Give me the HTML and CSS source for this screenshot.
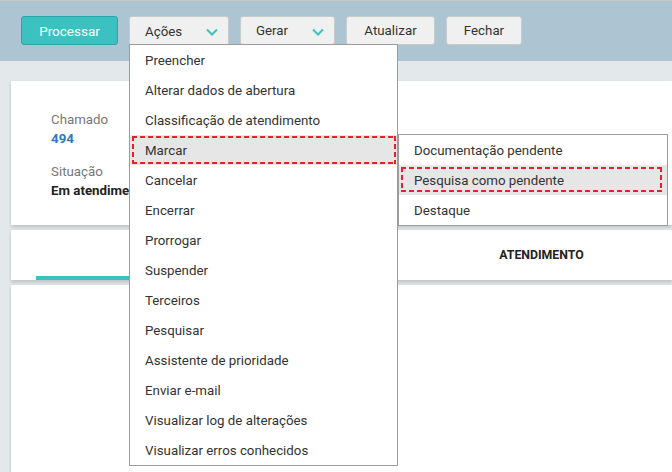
FILE: index.html
```html
<!DOCTYPE html>
<html lang="pt-BR">
<head>
<meta charset="utf-8">
<title>Chamado 494</title>
<link rel="stylesheet" href="styles.css">
</head>
<body>
<div class="page">
  <header class="toolbar">
    <button class="btn btn-primary w-processar">Processar</button>
    <button class="btn btn-drop w-acoes open">Ações
      <svg class="chev" width="12" height="8" viewBox="0 0 12 8"><path d="M1 1.5 L6 6.5 L11 1.5" fill="none" stroke="#3cc0c0" stroke-width="2"/></svg>
    </button>
    <button class="btn btn-drop w-gerar">Gerar
      <svg class="chev" width="12" height="8" viewBox="0 0 12 8"><path d="M1 1.5 L6 6.5 L11 1.5" fill="none" stroke="#3cc0c0" stroke-width="2"/></svg>
    </button>
    <button class="btn w-atualizar">Atualizar</button>
    <button class="btn w-fechar">Fechar</button>
  </header>

  <main class="content">
    <section class="card info">
      <div class="field">
        <div class="label">Chamado</div>
        <div class="value link">494</div>
      </div>
      <div class="field">
        <div class="label">Situação</div>
        <div class="value">Em atendimento</div>
      </div>
    </section>
    <section class="card tabs">
      <div class="tab active"></div>
      <div class="tab">ATENDIMENTO</div>
    </section>
    <section class="card body-card"></section>
  </main>

  <ul class="menu">
    <li>Preencher</li>
    <li>Alterar dados de abertura</li>
    <li>Classificação de atendimento</li>
    <li class="hl">Marcar</li>
    <li>Cancelar</li>
    <li>Encerrar</li>
    <li>Prorrogar</li>
    <li>Suspender</li>
    <li>Terceiros</li>
    <li>Pesquisar</li>
    <li>Assistente de prioridade</li>
    <li>Enviar e-mail</li>
    <li>Visualizar log de alterações</li>
    <li>Visualizar erros conhecidos</li>
  </ul>

  <ul class="menu submenu">
    <li>Documentação pendente</li>
    <li class="hl hl-sub">Pesquisa como pendente</li>
    <li>Destaque</li>
  </ul>
</div>
</body>
</html>
```

FILE: styles.css
```css
* { box-sizing: border-box; }
html, body {
  margin: 0;
  padding: 0;
}
body {
  width: 672px;
  height: 472px;
  overflow: hidden;
  font-family: Roboto, "Liberation Sans", Arial, sans-serif;
  font-size: 13.3px;
  color: #333;
  background: #e3e8eb;
}
.page {
  position: relative;
  height: 472px;
}

/* toolbar */
.toolbar {
  height: 61px;
  background: #adc5d2;
  border-top: 1px solid #c4c8ca;
  padding: 15px 0 0 21px;
  display: flex;
  align-items: flex-start;
  gap: 11px;
}
.btn {
  height: 29px;
  border: 1px solid #c6cbce;
  border-radius: 3px;
  background: #f0f0f0;
  color: #333;
  font-family: inherit;
  font-size: 13.3px;
  padding: 0;
  display: flex;
  align-items: center;
  justify-content: center;
  flex-shrink: 0;
}
.btn-primary {
  background: #3cc1c1;
  border-color: #2ea5a5;
  color: #fff;
  font-size: 13.5px;
}
.btn-drop {
  justify-content: flex-start;
  padding-left: 15px;
  position: relative;
}
.btn-drop .chev {
  position: absolute;
  right: 10px;
  top: 11px;
}
.btn.open { height: 30px; border-bottom-left-radius: 0; border-bottom-right-radius: 0; }
.w-processar { width: 97px; }
.w-acoes { width: 100px; }
.w-gerar { width: 95px; }
.w-atualizar { width: 89px; }
.w-fechar { width: 76px; }

/* content */
.content {
  padding: 20px 0 0 11px;
}
.card {
  background: #fff;
  box-shadow: 0 3px 3px rgba(0, 0, 0, 0.13), -1px 0 2px rgba(0, 0, 0, 0.05);
  margin-bottom: 5px;
}
.info {
  height: 144px;
  padding: 29px 0 0 40px;
  display: flex;
  flex-direction: column;
  gap: 14px;
}
.field { line-height: 19px; }
.label { color: #777; }
.value { font-weight: 700; color: #222; }
.value.link { color: #2f78bd; }

.tabs {
  height: 50px;
  display: flex;
  padding-left: 25px;
  overflow: hidden;
}
.tab {
  width: 337px;
  flex-shrink: 0;
  display: flex;
  align-items: center;
  justify-content: center;
  font-weight: 700;
  font-size: 12.3px;
  color: #222;
}
.tab.active {
  border-bottom: 5px solid #3cc1c1;
  height: 51px;
}
.body-card {
  height: 200px;
}

/* menus */
.menu {
  position: absolute;
  left: 129px;
  top: 44px;
  width: 269px;
  margin: 0;
  padding: 0;
  list-style: none;
  background: #fff;
  border: 1px solid #9c9c9c;
}
.menu li {
  height: 30px;
  line-height: 30px;
  padding: 1px 0 0 15px;
  white-space: nowrap;
  position: relative;
  color: #333;
}
.menu li.hl {
  background: #e6e6e6;
}
.menu li.hl::after {
  content: "";
  position: absolute;
  left: 2px;
  right: 1px;
  top: 1px;
  bottom: 1px;
  background:
    repeating-linear-gradient(90deg, #e3232b 0 5px, transparent 5px 8px) top left / 100% 2px no-repeat,
    repeating-linear-gradient(90deg, #e3232b 0 5px, transparent 5px 8px) bottom left / 100% 2px no-repeat,
    repeating-linear-gradient(180deg, #e3232b 0 5px, transparent 5px 8px) top left / 2px 100% no-repeat,
    repeating-linear-gradient(180deg, #e3232b 0 5px, transparent 5px 8px) top right / 2px 100% no-repeat;
}
.submenu {
  left: 398px;
  top: 134px;
  width: 270px;
}
.menu li.hl-sub::after {
  left: 2px;
  right: 5px;
  top: 2px;
  bottom: 3px;
}
```
